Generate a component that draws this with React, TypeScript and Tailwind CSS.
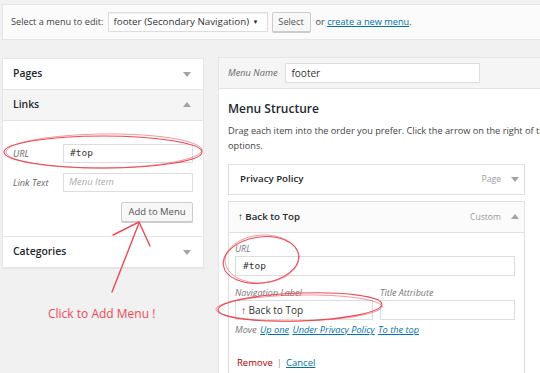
import React from "react";

const Caret = ({ up = false }: { up?: boolean }) => (
    <svg width="8" height="6" viewBox="0 0 8 6" className="shrink-0">
        {up ? <polygon points="0,5 8,5 4,0" fill="#a0a5aa" /> : <polygon points="0,1 8,1 4,6" fill="#a0a5aa" />}
    </svg>
);

const AccordionHead = ({ title, open = false }: { title: string; open?: boolean }) => (
    <div className={`flex items-center justify-between h-[31px] pl-[10px] pr-[12px] border-b border-[#e5e5e5] ${open ? 'bg-[#f5f5f5]' : 'bg-white'}`}>
        <span className="text-[10.4px] font-semibold text-[#23282d]">{title}</span>
        <Caret up={open} />
    </div>
);

const Annotations = () => (
    <svg width="540" height="373" className="absolute inset-0 pointer-events-none" fill="none" stroke="#ee4a55" strokeLinecap="round">
        {/* left url ellipse */}
        <ellipse cx="103" cy="152" rx="99" ry="16" strokeWidth="1.1" />
        <ellipse cx="104" cy="151" rx="98" ry="17" strokeWidth="0.8" opacity="0.7" transform="rotate(-0.6 104 151)" />
        {/* right url ellipse */}
        <ellipse cx="261" cy="260" rx="38" ry="23" strokeWidth="1.1" transform="rotate(-8 261 260)" />
        <ellipse cx="262" cy="259" rx="37" ry="24" strokeWidth="0.8" opacity="0.7" transform="rotate(-4 262 259)" />
        {/* right nav label ellipse */}
        <ellipse cx="300" cy="307" rx="82" ry="14" strokeWidth="1.1" transform="rotate(-2 300 307)" />
        <ellipse cx="299" cy="308" rx="83" ry="13" strokeWidth="0.8" opacity="0.7" transform="rotate(-1 299 308)" />
        {/* arrow */}
        <path d="M112 292 L139 223" strokeWidth="1.4" />
        <path d="M113 235 L139 222 L150 246" strokeWidth="1.4" />
    </svg>
);

const App = () => {
    return (
        <div className="relative w-[540px] h-[373px] overflow-hidden bg-[#f1f1f1] font-['Open_Sans',sans-serif] text-[#444]">
            {/* select menu bar */}
            <div className="mt-[4px] ml-[2px] h-[36px] w-[545px] flex items-center pl-[8px] bg-[#fbfbfb] border border-[#e5e5e5] whitespace-nowrap">
                <span className="text-[9.2px] text-[#444]">Select a menu to edit:</span>
                <div className="ml-[4px] w-[160px] h-[20px] flex items-center justify-between pl-[5px] pr-[8px] bg-white border border-[#ddd] shadow-[inset_0_1px_2px_rgba(0,0,0,0.07)]">
                    <span className="text-[9.8px] text-[#333]">footer (Secondary Navigation)</span>
                    <span className="text-[6px] text-[#222]">▼</span>
                </div>
                <button className="ml-[4px] w-[39px] h-[20px] text-[9.2px] text-[#555] bg-[#f7f7f7] border border-[#ccc] rounded-[2px] shadow-[0_1px_0_#ccc]">Select</button>
                <span className="ml-[5px] text-[9.2px] text-[#444]">
                    or <a className="text-[#0073aa] underline">create a new menu</a>.
                </span>
            </div>

            <div className="flex mt-[17px] ml-[2px] gap-[14px]">
                {/* left column */}
                <div className="w-[202px] shrink-0 flex flex-col">
                    <div className="mt-[1px] bg-white border border-[#e5e5e5] shadow-[0_1px_1px_rgba(0,0,0,0.04)]">
                        <AccordionHead title="Pages" />
                        <AccordionHead title="Links" open />
                        <div className="h-[116px] pt-[23px] pl-[10px] pr-[10px] border-b border-[#e5e5e5] flex flex-col">
                            <div className="flex items-center justify-between">
                                <span className="text-[9.2px] italic text-[#666]">URL</span>
                                <div className="w-[130px] h-[19px] flex items-center pl-[6px] border border-[#ddd] bg-white">
                                    <span className="text-[9.5px] font-['DejaVu_Sans_Mono',monospace] text-[#333]">#top</span>
                                </div>
                            </div>
                            <div className="flex items-center justify-between mt-[10px]">
                                <span className="text-[9.2px] italic text-[#666]">Link Text</span>
                                <div className="w-[130px] h-[19px] flex items-center pl-[5px] border border-[#ddd] bg-white">
                                    <span className="text-[9.5px] italic text-[#aaa]">Menu Item</span>
                                </div>
                            </div>
                            <div className="flex justify-end mt-[10px]">
                                <button className="w-[72px] h-[20px] text-[9.5px] text-[#555] bg-[#f7f7f7] border border-[#ccc] rounded-[2px] shadow-[0_1px_0_#ccc]">Add to Menu</button>
                            </div>
                        </div>
                        <div className="flex items-center justify-between h-[30px] pl-[10px] pr-[12px] bg-white">
                            <span className="text-[10.4px] font-semibold text-[#23282d]">Categories</span>
                            <Caret />
                        </div>
                    </div>
                    <div className="mt-[37px] pl-[46px] text-[12px] text-[#ee4a55]">Click to Add Menu !</div>
                </div>

                {/* right column */}
                <div className="w-[330px] shrink-0 bg-white border border-[#e5e5e5] shadow-[0_1px_1px_rgba(0,0,0,0.04)]">
                    <div className="h-[31px] flex items-center pl-[9px] bg-[#f5f5f5] border-b border-[#e5e5e5]">
                        <span className="text-[9.2px] italic text-[#666]">Menu Name</span>
                        <div className="ml-[8px] w-[195px] h-[20px] flex items-center pl-[5px] bg-white border border-[#ddd]">
                            <span className="text-[10px] text-[#333]">footer</span>
                        </div>
                    </div>
                    <div className="pl-[9px] pr-[22px]">
                        <div className="mt-[12px] text-[12px] font-semibold text-[#23282d] leading-[16px]">Menu Structure</div>
                        <p className="mt-[6px] text-[9.2px] leading-[15px] text-[#444] whitespace-nowrap">
                            Drag each item into the order you prefer. Click the arrow on the right of the item to reveal additional configuration
                            <br />
                            options.
                        </p>
                        <div className="mt-[11px] h-[31px] flex items-center justify-between pl-[11px] pr-[5px] bg-white border border-[#dfdfdf]">
                            <span className="text-[9.7px] font-semibold text-[#23282d]">Privacy Policy</span>
                            <div className="flex items-center gap-[10px]">
                                <span className="text-[8.6px] text-[#999]">Page</span>
                                <Caret />
                            </div>
                        </div>
                        <div className="mt-[6px] border border-[#dfdfdf]">
                            <div className="h-[31px] flex items-center justify-between pl-[9px] pr-[5px] bg-[#fbfbfb] border-b border-[#dfdfdf]">
                                <span className="text-[9.7px] font-semibold text-[#23282d]">↑ Back to Top</span>
                                <div className="flex items-center gap-[10px]">
                                    <span className="text-[8.6px] text-[#999]">Custom</span>
                                    <Caret up />
                                </div>
                            </div>
                            <div className="pl-[6px] pr-[9px] pt-[10px] pb-[20px] bg-white">
                                <div className="text-[9px] italic text-[#777] leading-[12px]">URL</div>
                                <div className="mt-[1px] h-[20px] flex items-center pl-[7px] border border-[#ddd]">
                                    <span className="text-[9.5px] font-['DejaVu_Sans_Mono',monospace] text-[#333]">#top</span>
                                </div>
                                <div className="mt-[11px] flex gap-[7px]">
                                    <div className="w-[138px]">
                                        <div className="text-[9px] italic text-[#777] leading-[12px]">Navigation Label</div>
                                        <div className="mt-[1px] h-[20px] flex items-center pl-[5px] border border-[#ddd]">
                                            <span className="text-[10px] text-[#333]">↑ Back to Top</span>
                                        </div>
                                    </div>
                                    <div className="flex-1">
                                        <div className="text-[9px] italic text-[#777] leading-[12px]">Title Attribute</div>
                                        <div className="mt-[1px] h-[20px] border border-[#ddd]" />
                                    </div>
                                </div>
                                <div className="mt-[3px] text-[9.2px] italic text-[#777] leading-[14px]">
                                    Move <a className="ml-[1px] text-[#0073aa] underline">Up one</a> <a className="ml-[1px] text-[#0073aa] underline">Under Privacy Policy</a> <a className="ml-[1px] text-[#0073aa] underline">To the top</a>
                                </div>
                                <div className="mt-[19px] pl-[2px] text-[9.5px] leading-[14px]">
                                    <span className="text-[#a00]">Remove</span>
                                    <span className="mx-[4px] text-[#999]">|</span>
                                    <a className="text-[#0073aa] underline">Cancel</a>
                                </div>
                            </div>
                        </div>
                    </div>
                </div>
            </div>

            <Annotations />
        </div>
    );
};

export default App;
